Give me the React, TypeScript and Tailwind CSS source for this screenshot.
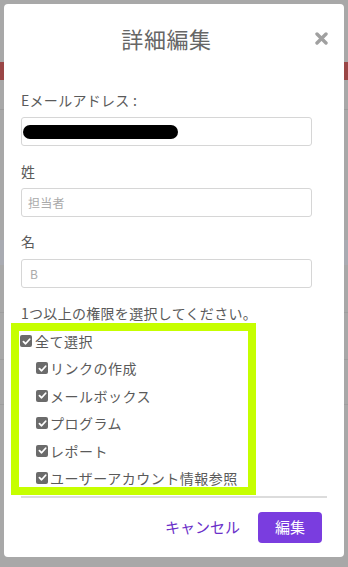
const font = { fontFamily: '"Noto Sans CJK JP", "Liberation Sans", sans-serif' };

const Check = ({ className }: { className: string }) => (
  <span
    className={`flex h-[12px] w-[12px] shrink-0 items-center justify-center rounded-[2px] bg-[#6b6b6b] ${className}`}
  >
    <svg width="9" height="9" viewBox="0 0 10 10" fill="none">
      <path d="M1.6 5.2 4 7.5 8.5 2.5" stroke="#fff" strokeWidth="2" strokeLinecap="round" strokeLinejoin="round" />
    </svg>
  </span>
);

const App = () => {
  const permissions = ["リンクの作成", "メールボックス", "プログラム", "レポート", "ユーザーアカウント情報参照"];

  return (
    <div className="relative h-[567px] w-[348px] overflow-hidden bg-[#a8a8a8]" style={font}>
      {/* page behind the dialog */}
      <div className="flex flex-col">
        <div className="h-[62px]" />
        <div className="h-[18px] bg-[#9a4646]" />
        <div className="h-[30px] border-b border-[#9c9c9c]" />
        <div className="h-[130px]" />
        <div className="h-[25px] bg-[#a9abb2]" />
        <div className="h-[48px] border-b border-[#9e9e9e]" />
        <div className="h-[47px] border-b border-[#9e9e9e]" />
        <div className="h-[45px] border-b border-[#9e9e9e]" />
      </div>

      {/* dialog */}
      <div className="absolute left-[4px] top-[4px] h-[553px] w-[340px] rounded-[4px] bg-white pl-[17px]">
        <div className="flex items-center pt-[19px]">
          <h2 className="w-[291px] text-center text-[22px] leading-[30px] tracking-[0.6px] text-[#666]">詳細編集</h2>
          <button className="ml-[2px] flex h-[14px] w-[14px] items-center justify-center">
            <svg width="13" height="13" viewBox="0 0 13 13">
              <path d="M2 2 11 11M11 2 2 11" stroke="#a0a0a0" strokeWidth="3.4" strokeLinecap="round" />
            </svg>
          </button>
        </div>

        <div className="w-[291px] tracking-[0.3px]">
          <label className="mt-[37px] block text-[14px] leading-[20px] text-[#5a5a5a]">Eメールアドレス :</label>
          <div className="mt-[7px] flex h-[29px] items-center rounded-[3px] border border-[#d6d6d6] pl-[1px]">
            <span className="h-[14px] w-[155px] rounded-full bg-black" />
          </div>

          <label className="mt-[15px] block text-[14px] leading-[20px] text-[#5a5a5a]">姓</label>
          <div className="mt-[7px] flex h-[29px] items-center rounded-[3px] border border-[#d6d6d6] pl-[6px] text-[12px] text-[#aaa]">
            担当者
          </div>

          <label className="mt-[14px] block text-[14px] leading-[20px] text-[#5a5a5a]">名</label>
          <div className="mt-[8px] flex h-[29px] items-center rounded-[3px] border border-[#d6d6d6] pl-[8px] text-[12px] text-[#aaa]">
            B
          </div>

          <p className="mt-[15px] text-[14px] leading-[20px] text-[#5a5a5a]">1つ以上の権限を選択してください。</p>

          <div className="mt-[8px] flex flex-col gap-[7.4px] text-[14px] leading-[20px] tracking-[0.5px] text-[#5a5a5a]">
            <div className="flex items-center">
              <Check className="-ml-[1px] mr-[3px]" />
              全て選択
            </div>
            {permissions.map((p) => (
              <div key={p} className="flex items-center pl-[15px]">
                <Check className="mr-[2px]" />
                {p}
              </div>
            ))}
          </div>
        </div>

        <div className="mt-[8px] h-[2px] w-[306px] bg-[#dcdcdc]" />

        <div className="mt-[14px] flex w-[301px] items-center justify-end">
          <button className="mr-[18px] text-[15px] leading-[20px] text-[#6b30c9]">キャンセル</button>
          <button className="h-[31px] w-[64px] rounded-[4px] bg-[#7a3ddf] text-[15px] text-white">編集</button>
        </div>

        {/* highlight annotation */}
        <div className="absolute left-[7px] top-[319px] h-[172px] w-[245px] border-[8px] border-[#c6ff00]" />
      </div>
    </div>
  );
};

export default App;
